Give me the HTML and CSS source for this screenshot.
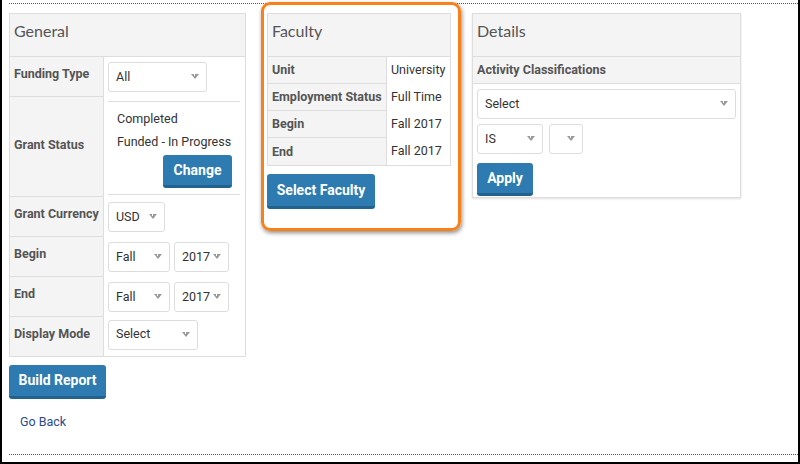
FILE: index.html
```html
<!DOCTYPE html>
<html lang="en">
<head>
<meta charset="utf-8">
<title>Report Builder</title>
<link rel="stylesheet" href="styles.css">
</head>
<body>
<div class="frame">
  <div class="columns">
    <section class="panel general">
      <div class="panel-head">General</div>
      <div class="form-grid">
        <div class="lbl">Funding Type</div>
        <div class="val"><div class="select w-all">All</div></div>

        <div class="lbl tall">Grant Status</div>
        <div class="val stretch">
          <div class="status-box">
            <div class="status-line">Completed</div>
            <div class="status-line">Funded - In Progress</div>
            <div class="status-actions"><span class="btn btn-change">Change</span></div>
          </div>
        </div>

        <div class="lbl">Grant Currency</div>
        <div class="val"><div class="select w-usd">USD</div></div>

        <div class="lbl">Begin</div>
        <div class="val"><div class="select w-term">Fall</div><div class="select w-year">2017</div></div>

        <div class="lbl">End</div>
        <div class="val"><div class="select w-term">Fall</div><div class="select w-year">2017</div></div>

        <div class="lbl last">Display Mode</div>
        <div class="val last"><div class="select w-mode">Select</div></div>
      </div>
    </section>

    <div class="faculty-col">
      <div class="highlight"></div>
      <section class="panel faculty">
        <div class="panel-head">Faculty</div>
        <div class="info-grid">
          <div class="lbl2">Unit</div><div class="val2">University</div>
          <div class="lbl2">Employment Status</div><div class="val2">Full Time</div>
          <div class="lbl2">Begin</div><div class="val2">Fall 2017</div>
          <div class="lbl2 last">End</div><div class="val2">Fall 2017</div>
        </div>
      </section>
      <span class="btn btn-faculty">Select Faculty</span>
    </div>

    <section class="panel details">
      <div class="panel-head">Details</div>
      <div class="sub-head">Activity Classifications</div>
      <div class="details-body">
        <div class="select w-full">Select</div>
        <div class="select-row">
          <div class="select w-is">IS</div>
          <div class="select w-empty"></div>
        </div>
        <span class="btn btn-apply">Apply</span>
      </div>
    </section>
  </div>

  <div class="actions">
    <span class="btn btn-build">Build Report</span>
    <a class="back-link" href="#">Go Back</a>
  </div>
</div>
</body>
</html>
```

FILE: styles.css
```css
* { box-sizing: border-box; }

html, body { margin: 0; padding: 0; }

body {
  width: 800px;
  height: 464px;
  overflow: hidden;
  background: #fff;
  border-left: 2px solid #000;
  border-right: 2px solid #000;
  border-bottom: 2px solid #000;
  font-family: Roboto, "Liberation Sans", Arial, sans-serif;
  font-size: 12px;
  color: #333;
}

.frame {
  margin: 3px 0 0 7px;
  height: 452px;
  border-top: 1px dotted #555;
  border-bottom: 1px dotted #555;
  padding-top: 9px;
}

.columns {
  display: flex;
  align-items: flex-start;
  gap: 21px;
}

.panel {
  border: 1px solid #ddd;
  background: #fff;
}

.panel-head {
  height: 43px;
  background: #f4f4f4;
  border-bottom: 1px solid #ddd;
  padding: 7px 4px 0;
  font-family: Lato, "Open Sans", sans-serif;
  font-size: 16px;
  line-height: 20px;
  color: #555;
}

/* General panel */
.general { width: 237px; }

.form-grid {
  display: grid;
  grid-template-columns: 94px 1fr;
}

.lbl {
  height: 40px;
  display: flex;
  align-items: center;
  padding: 0 4px 6px 4px;
  background: #f4f4f4;
  border-right: 1px solid #ddd;
  border-bottom: 1px solid #ddd;
  font-weight: 700;
  font-size: 12.5px;
  color: #555;
  white-space: nowrap;
}
.lbl.tall { height: 100px; padding-bottom: 4px; }
.lbl.last { height: 39px; border-bottom: 0; }

.val {
  display: flex;
  align-items: center;
  gap: 4px;
  padding-left: 4px;
}
.val.stretch { align-items: flex-start; }
.val.last { padding-bottom: 4px; }

.status-box {
  width: 132px;
  margin-top: 4px;
  border-top: 1px solid #ddd;
  border-bottom: 1px solid #ddd;
  padding: 5px 8px 6px 9px;
  font-size: 12.5px;
  color: #333;
}
.status-line { line-height: 23px; white-space: nowrap; }
.status-actions {
  display: flex;
  justify-content: flex-end;
  margin-top: 2px;
}

/* select boxes */
.select {
  position: relative;
  height: 30px;
  display: flex;
  align-items: center;
  padding: 0 0 2px 7px;
  border: 1px solid #ddd;
  border-radius: 3px;
  background: #fff;
  font-size: 12.5px;
  color: #333;
}
.select::after {
  content: "";
  position: absolute;
  right: 7px;
  top: 11px;
  border-left: 4px solid transparent;
  border-right: 4px solid transparent;
  border-top: 5px solid #999;
}
.select::before {
  content: "";
  position: absolute;
  right: 11px;
  top: 11px;
  width: 1px;
  height: 2px;
  background: #fff;
  z-index: 1;
}

.w-all { width: 99px; }
.w-usd { width: 57px; }
.w-term { width: 62px; }
.w-year { width: 55px; }
.w-mode { width: 90px; }
.w-full { width: 259px; }
.w-is { width: 66px; }
.w-empty { width: 34px; }

/* buttons */
.btn {
  display: inline-flex;
  align-items: center;
  justify-content: center;
  height: 33px;
  padding: 0 0 1px;
  background: #2d7bb1;
  border-bottom: 3px solid #22628f;
  border-radius: 3px;
  color: #fff;
  font-family: Roboto, "Liberation Sans", Arial, sans-serif;
  font-weight: 700;
  font-size: 14px;
  white-space: nowrap;
}
.btn-change { width: 69px; }
.btn-faculty { width: 108px; height: 35px; margin-top: 8px; }
.btn-apply { width: 56px; margin-top: 9px; }
.btn-build { width: 97px; height: 34px; }

/* Faculty */
.faculty-col {
  position: relative;
  width: 184px;
}
.faculty { width: 184px; }

.highlight {
  position: absolute;
  left: -6px;
  top: -11px;
  width: 200px;
  height: 229px;
  border: 3px solid #f7821b;
  border-radius: 9px;
  box-shadow: 1px 2px 4px rgba(0, 0, 0, 0.45);
  pointer-events: none;
}

.info-grid {
  display: grid;
  grid-template-columns: 119px 1fr;
}
.lbl2 {
  height: 27px;
  display: flex;
  align-items: center;
  padding: 0 4px 1px;
  background: #f4f4f4;
  border-right: 1px solid #ddd;
  border-bottom: 1px solid #ddd;
  font-weight: 700;
  font-size: 12.5px;
  color: #555;
  white-space: nowrap;
}
.lbl2.last { border-bottom: 0; }
.val2 {
  display: flex;
  align-items: center;
  padding: 0 0 2px 4px;
  font-size: 12.5px;
  color: #333;
  white-space: nowrap;
}

/* Details */
.details {
  width: 269px;
  box-shadow: 0 1px 2px rgba(0, 0, 0, 0.12);
}
.sub-head {
  height: 27px;
  display: flex;
  align-items: center;
  padding: 0 0 1px 4px;
  background: #f4f4f4;
  border-bottom: 1px solid #ddd;
  font-weight: 700;
  font-size: 12.5px;
  color: #555;
}
.details-body {
  padding: 5px 4px 1px;
}
.select-row {
  display: flex;
  gap: 6px;
  margin-top: 5px;
}

/* actions */
.actions {
  display: flex;
  flex-direction: column;
  align-items: flex-start;
  margin-top: 8px;
}
.back-link {
  margin-top: 15px;
  margin-left: 11px;
  color: #2b4c8c;
  font-size: 12.5px;
  text-decoration: none;
}
```
